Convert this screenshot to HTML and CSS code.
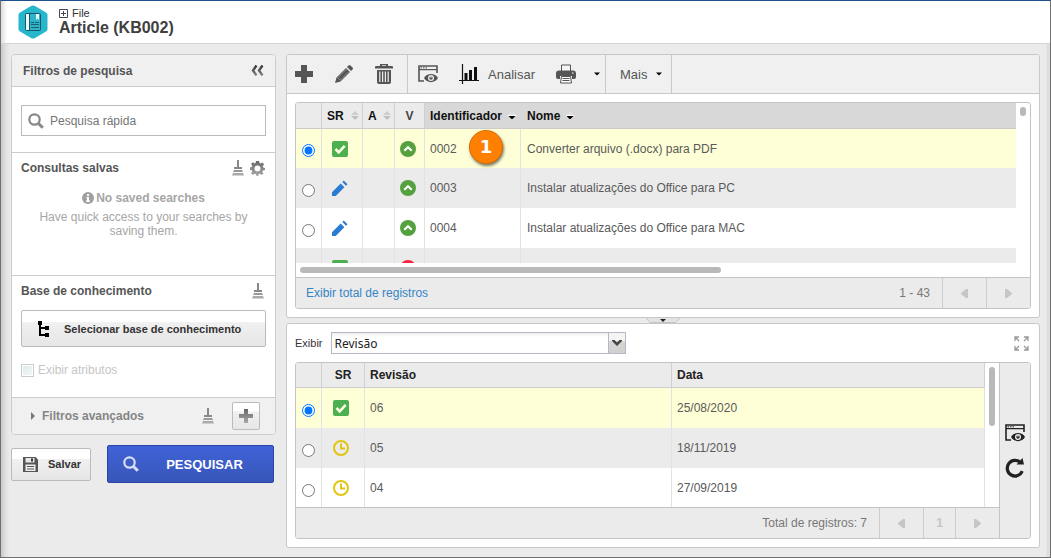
FILE: index.html
```html
<!DOCTYPE html>
<html lang="pt-BR">
<head>
<meta charset="utf-8">
<title>Article (KB002)</title>
<link rel="stylesheet" href="styles.css">
</head>
<body>
<svg class="sprite" aria-hidden="true">
  <defs>
    <linearGradient id="metal" x1="0" y1="0" x2="0" y2="1"><stop offset="0" stop-color="#666"/><stop offset="1" stop-color="#aaa"/></linearGradient>
    <linearGradient id="metal-dark" x1="0" y1="0" x2="0" y2="1"><stop offset="0" stop-color="#333"/><stop offset="1" stop-color="#888"/></linearGradient>
  </defs>
  <symbol id="i-broom" viewBox="0 0 12 16"><path d="M5 0h2v7h3v2H2V7h3z" fill="#888"/><path d="M2 10h8l1 2H1z" fill="#999"/><path d="M1 13h10l1 2.500H0z" fill="#aaa"/></symbol>
  <symbol id="i-check" viewBox="0 0 16 16"><rect width="16" height="16" rx="2" fill="#4caf50"/><path d="M3.500 8l3.200 3.300L12.700 4.800" fill="none" stroke="#fdfde0" stroke-width="2.600"/></symbol>
  <symbol id="i-edit" viewBox="0 0 16 16"><path d="M0 12.300L8.700 3.600l3.700 3.700L3.700 16H0zM10.300 2l1.500-1.500 3.700 3.700L14 5.700z" fill="#2b7bd0"/></symbol>
  <symbol id="i-up" viewBox="0 0 16 16"><circle cx="8" cy="8" r="8" fill="#55a03f"/><path d="M4.300 9.700L8 6.200l3.700 3.500" fill="none" stroke="#fff" stroke-width="2.200"/></symbol>
  <symbol id="i-clock" viewBox="0 0 16 16"><circle cx="8" cy="8" r="7" fill="none" stroke="#e2c511" stroke-width="2"/><path d="M8 3.500V8.500h4" fill="none" stroke="#e2c511" stroke-width="2"/></symbol>
  <symbol id="i-sort" viewBox="0 0 8 9"><path d="M4 0l4 4H0z" fill="#ccc"/><path d="M0 5h8L4 9z" fill="#c0c0c0"/></symbol>
  <symbol id="i-sorted" viewBox="0 0 8 9"><path d="M4 0l4 4H0z" fill="#e0e0e0"/><path d="M0 4h8v1H0z" fill="#fff"/><path d="M.5 5h7L4.500 8h-1z" fill="#000"/></symbol>
  <symbol id="i-caret" viewBox="0 0 6 4"><path d="M0 .5h6L3 3.500z"/></symbol>
  <symbol id="i-prev" viewBox="0 0 7 9"><path d="M7 0v9H5L0 5V4l5-4z" fill="#c6c6c6"/></symbol>
  <symbol id="i-next" viewBox="0 0 7 9"><path d="M0 0v9h2l5-4V4L2 0z" fill="#c6c6c6"/></symbol>
  <symbol id="i-preview" viewBox="0 0 20 18"><path d="M6 16H1V1h18v7" fill="none" stroke="currentColor" stroke-width="1.600"/><path d="M1 4.600h18" stroke="currentColor" stroke-width="1.200"/><path d="M2.500 2.800h1.500M5 2.800h1.500M7.500 2.800H9" stroke="currentColor"/><path d="M6 13c2.500-5.500 11.500-5.500 14 0-2.500 5.500-11.500 5.500-14 0z" fill="currentColor"/><circle cx="13" cy="13" r="3" fill="#eee"/><circle cx="13" cy="13" r="1.700" fill="currentColor"/><path d="M13 11v2" stroke="#eee" stroke-width=".9"/></symbol>
  <symbol id="i-lens" viewBox="0 0 16 16"><circle cx="6.500" cy="6.500" r="5.200" fill="none" stroke="currentColor" stroke-width="2.200"/><path d="M10.500 10.500l4.300 4.300" stroke="currentColor" stroke-width="3"/></symbol>
</svg>

<div class="window">
  <header class="masthead">
    <svg class="logo" viewBox="0 0 30 34"><path d="M15 .5q1 0 2 .6l11 6.300q1.500.9 1.500 2.600v14q0 1.700-1.500 2.600l-11 6.300q-2 1.200-4 0l-11-6.300Q.5 25.700.5 24V10q0-1.700 1.500-2.600l11-6.300q1-.6 2-.6z" fill="#27b7cc"/><rect x="7.500" y="8.500" width="15" height="17" rx="1" fill="#2fb3c9" stroke="#1d5468"/><path d="M8 9h3v16H8z" fill="#e8fbfd"/><path d="M11.500 9v16" stroke="#1d5468"/><path d="M18 9h3v6l-1.500-1.500L18 15z" fill="#e8fbfd"/><path d="M13 17.500h3M13 19.500h8M13 22.500h8M17 17.500h4" stroke="#1d5468" stroke-width=".9"/></svg>
    <div>
      <div class="crumb"><svg class="icon-9" viewBox="0 0 9 9"><path d="M.5.5h8v8h-8zM2 4.500h5M4.500 2v5" fill="none" stroke="#445"/></svg>File</div>
      <h1>Article (KB002)</h1>
    </div>
  </header>

  <main class="workspace">
    <aside class="filters">
      <form>
        <div class="card">
          <div class="card-head">
            <h2>Filtros de pesquisa</h2>
            <button type="button" class="bare" aria-label="Recolher"><svg class="icon-collapse" viewBox="0 0 13 11"><path d="M5.500.5L2 5.500l3.500 5M11.500.5L8 5.500l3.500 5" fill="none" stroke="url(#metal-dark)" stroke-width="2.400"/></svg></button>
          </div>
          <div class="section section-search">
            <div class="search-box">
              <svg class="icon-16"><use href="#i-lens"/></svg>
              <input type="text" placeholder="Pesquisa rápida" aria-label="Pesquisa rápida">
            </div>
          </div>
          <div class="section section-saved">
            <div class="section-title">
              <h3>Consultas salvas</h3>
              <button type="button" class="bare" aria-label="Limpar"><svg class="icon-broom"><use href="#i-broom"/></svg></button>
              <button type="button" class="bare" aria-label="Configurar"><svg class="icon-gear" viewBox="0 0 15 15"><g fill="url(#metal)"><path fill-rule="evenodd" d="M6 0h3l.5 2 1.300.6L12.500 1.500l1.500 2-1.300 1.700.6 1.300L15 7v2l-2 .5-.6 1.300 1.100 1.700-2 1.500-1.700-1.300-1.300.6L8.500 15h-2L6 13.300l-1.300-.6L3 14l-2-1.700 1.300-1.700-.6-1.300L0 9V6.500L1.800 6l.5-1.300L1 3l2-1.800 1.700 1.200L5.500 2zM7.500 4.500a3 3 0 100 6 3 3 0 000-6z"/></g></svg></button>
            </div>
            <p class="empty-title"><svg class="icon-12" viewBox="0 0 12 12"><circle cx="6" cy="6" r="6" fill="#a0a0a0"/><path d="M5 2h2v2H5zM4.500 5H7v3.500h1V10H4V8.500h1V6.200h-.5z" fill="#fff"/></svg>No saved searches</p>
            <p class="empty-text">Have quick access to your searches by saving them.</p>
          </div>
          <div class="section section-base">
            <div class="section-title">
              <h3>Base de conhecimento</h3>
              <button type="button" class="bare" aria-label="Limpar"><svg class="icon-broom"><use href="#i-broom"/></svg></button>
            </div>
            <button type="button" class="btn btn-select"><svg class="icon-tree" viewBox="0 0 12 16"><path d="M0 0h4v4H0zM7 5h4v4H7zM7 12h4v4H7z"/><path d="M2 3v11h6M2 7h6" fill="none" stroke="#000" stroke-width="2"/></svg>Selecionar base de conhecimento</button>
            <label class="attr"><input type="checkbox" disabled>Exibir atributos</label>
          </div>
          <div class="card-foot">
            <svg class="icon-tri" viewBox="0 0 4 8"><path d="M0 0l4 4-4 4z" fill="#777"/></svg>
            <h3>Filtros avançados</h3>
            <button type="button" class="bare" aria-label="Limpar"><svg class="icon-broom"><use href="#i-broom"/></svg></button>
            <button type="button" class="btn btn-add" aria-label="Adicionar"><svg class="icon-14" viewBox="0 0 14 14"><path d="M5 0h4v5h5v4H9v5H5V9H0V5h5z" fill="url(#metal)"/></svg></button>
          </div>
        </div>
        <div class="actions">
          <button type="button" class="btn btn-save"><svg class="icon-15" viewBox="0 0 15 15"><path d="M0 0h12.500L15 2.500V15H0z" fill="#555"/><path d="M2.500 1h9v4.500h-9z" fill="#e8e8e8"/><path d="M8 1.500h2v3H8z" fill="#333"/><path d="M2.500 7.500h10V14h-10z" fill="#eee"/><path d="M4 9.500h7M4 12h7" stroke="#555"/></svg>Salvar</button>
          <button type="submit" class="btn-go"><svg class="icon-16"><use href="#i-lens"/></svg><span>PESQUISAR</span></button>
        </div>
      </form>
    </aside>

    <div class="results">
      <section class="panel">
        <div class="toolbar">
          <div class="tool-group group-edit">
            <button type="button" class="bare" aria-label="Novo"><svg class="icon-18" viewBox="0 0 18 18"><path d="M6 0h6v6h6v6h-6v6H6v-6H0V6h6z" fill="#555"/></svg></button>
            <button type="button" class="bare" aria-label="Editar"><svg class="icon-18" viewBox="0 0 18 18"><path d="M0 18l1.500-5.500L11 3l4 4-9.500 9.500zM12 2l1.500-1.500q1-1 2 0l2 2q1 1 0 2L16 6z" fill="#555"/><path d="M2.500 12.500l3 3M3 12.500L11.500 4M5.500 15L14 6.500" stroke="#aaa" stroke-width=".7"/></svg></button>
            <button type="button" class="bare" aria-label="Excluir"><svg class="icon-trash" viewBox="0 0 18 20"><path d="M0 3q0-1 1-1h4V0h8v2h4q1 0 1 1v1.500H0zM7 1.200V2h4v-.8z" fill="#555" fill-rule="evenodd"/><path d="M2 6h14v12q0 2-2 2H4q-2 0-2-2z" fill="#555"/><path d="M4.800 7.500V18M7.600 7.500V18M10.400 7.500V18M13.200 7.500V18" stroke="#efefef" stroke-width="1.200"/></svg></button>
          </div>
          <div class="tool-group group-view">
            <button type="button" class="bare" aria-label="Visualizar"><svg class="icon-preview"><use href="#i-preview"/></svg></button>
            <button type="button" class="bare tool-text"><svg class="icon-chart" viewBox="0 0 20 20"><path d="M3.500 0v20M0 16.500h20" stroke="#111" stroke-width="1.200"/><path d="M5.500 9h3v8h-3zM10 6h3v11h-3zM15 3h3v14h-3z" fill="#111"/></svg>Analisar</button>
            <button type="button" class="bare tool-print" aria-label="Imprimir"><svg class="icon-print" viewBox="0 0 20 20"><path d="M5.500 7V1h9v6" fill="#f4f4f4" stroke="#555"/><path d="M3 6.500h14q3 0 3 3V13q0 2-2 2h-2v-3H4v3H2q-2 0-2-2V9.500q0-3 3-3z" fill="#555"/><path d="M5.500 12.500h9l1 6.500H4.500z" fill="#fff" stroke="#555"/><path d="M6.500 14.500h7M6.500 16.500h7" stroke="#555"/><path d="M16 9h1.500" stroke="#fff"/></svg><svg class="icon-caret"><use href="#i-caret"/></svg></button>
          </div>
          <div class="tool-group group-more">
            <button type="button" class="bare tool-text">Mais<svg class="icon-caret"><use href="#i-caret"/></svg></button>
          </div>
        </div>

        <div class="grid-wrap">
          <div class="grid">
            <div class="grid-body body-articles">
              <div class="viewport">
                <table class="table-articles">
                  <colgroup><col class="c-radio"><col class="c-sr"><col class="c-a"><col class="c-v"><col class="c-id"><col></colgroup>
                  <thead>
                    <tr>
                      <th aria-label="Selecionar"></th>
                      <th><span class="sorter">SR<svg class="icon-sort"><use href="#i-sort"/></svg></span></th>
                      <th><span class="sorter">A<svg class="icon-sort"><use href="#i-sort"/></svg></span></th>
                      <th class="center plain">V</th>
                      <th class="active"><span class="sorter">Identificador<svg class="icon-sort"><use href="#i-sorted"/></svg></span></th>
                      <th class="active"><span class="sorter sorter-name">Nome<svg class="icon-sort"><use href="#i-sorted"/></svg></span></th>
                    </tr>
                  </thead>
                  <tbody>
                    <tr class="selected">
                      <td><input type="radio" name="article" aria-label="0002" checked></td>
                      <td class="center"><svg class="icon-16"><use href="#i-check"/></svg></td><td></td>
                      <td class="center"><svg class="icon-16"><use href="#i-up"/></svg></td>
                      <td class="has-step">0002<span class="step">1</span></td><td class="name">Converter arquivo (.docx) para PDF</td>
                    </tr>
                    <tr class="odd">
                      <td><input type="radio" name="article" aria-label="0003"></td>
                      <td class="center"><svg class="icon-16"><use href="#i-edit"/></svg></td><td></td>
                      <td class="center"><svg class="icon-16"><use href="#i-up"/></svg></td>
                      <td>0003</td><td class="name">Instalar atualizações do Office para PC</td>
                    </tr>
                    <tr>
                      <td><input type="radio" name="article" aria-label="0004"></td>
                      <td class="center"><svg class="icon-16"><use href="#i-edit"/></svg></td><td></td>
                      <td class="center"><svg class="icon-16"><use href="#i-up"/></svg></td>
                      <td>0004</td><td class="name">Instalar atualizações do Office para MAC</td>
                    </tr>
                    <tr class="odd">
                      <td></td>
                      <td class="center"><svg class="icon-16"><use href="#i-check"/></svg></td><td></td>
                      <td class="center"><svg class="icon-16" viewBox="0 0 16 16"><circle cx="8" cy="8" r="8" fill="#f5243f"/></svg></td>
                      <td></td><td></td>
                    </tr>
                  </tbody>
                </table>
              </div>
              <div class="vtrack"><div class="vthumb thumb-short"></div></div>
            </div>
            <div class="htrack"><div class="hthumb"></div></div>
            <div class="pager">
              <a href="#total">Exibir total de registros</a>
              <span class="count">1 - 43</span>
              <button type="button" class="page-btn" aria-label="Anterior"><svg class="icon-page"><use href="#i-prev"/></svg></button>
              <button type="button" class="page-btn" aria-label="Próxima"><svg class="icon-page"><use href="#i-next"/></svg></button>
            </div>
          </div>
        </div>
      </section>

      <div class="splitter"><svg viewBox="0 0 34 5"><path d="M0 0l4 4.500h26L34 0" fill="#e3e3e3" stroke="#c4c4c4"/><path d="M14 1h6l-3 3z" fill="#222"/></svg></div>

      <section class="panel panel-detail">
        <div class="show-row">
          <label for="show">Exibir</label>
          <div class="combo">
            <select id="show"><option>Revisão</option></select>
            <span class="combo-arrow"><svg viewBox="0 0 10 6"><path d="M0 0h2.500L5 2.500 7.500 0H10v1L5 6 0 1z" fill="#444"/></svg></span>
          </div>
          <button type="button" class="bare expand" aria-label="Expandir"><svg class="icon-15" viewBox="0 0 15 15"><path d="M1 5V1h4M1 1l4 4M10 1h4v4M14 1l-4 4M1 10v4h4M1 14l4-4M14 10v4h-4M14 14l-4-4" fill="none" stroke="#999" stroke-width="1.300"/></svg></button>
        </div>
        <div class="grid detail-grid">
          <div class="detail-main">
            <div class="grid-body body-revisions">
              <div class="viewport">
                <table class="table-revisions">
                  <colgroup><col class="c-radio"><col class="c-status"><col class="c-revision"><col></colgroup>
                  <thead><tr><th aria-label="Selecionar"></th><th class="center">SR</th><th>Revisão</th><th>Data</th></tr></thead>
                  <tbody>
                    <tr class="selected"><td><input type="radio" name="revision" aria-label="06" checked></td><td class="center"><svg class="icon-16"><use href="#i-check"/></svg></td><td>06</td><td>25/08/2020</td></tr>
                    <tr class="odd"><td><input type="radio" name="revision" aria-label="05"></td><td class="center"><svg class="icon-16"><use href="#i-clock"/></svg></td><td>05</td><td>18/11/2019</td></tr>
                    <tr><td><input type="radio" name="revision" aria-label="04"></td><td class="center"><svg class="icon-16"><use href="#i-clock"/></svg></td><td>04</td><td>27/09/2019</td></tr>
                  </tbody>
                </table>
              </div>
              <div class="vtrack"><div class="vthumb thumb-long"></div></div>
            </div>
            <div class="pager">
              <span class="count">Total de registros: 7</span>
              <button type="button" class="page-btn" aria-label="Anterior"><svg class="icon-page"><use href="#i-prev"/></svg></button>
              <button type="button" class="page-btn page-num">1</button>
              <button type="button" class="page-btn" aria-label="Próxima"><svg class="icon-page"><use href="#i-next"/></svg></button>
            </div>
          </div>
          <div class="side-tools">
            <button type="button" class="bare" aria-label="Visualizar"><svg class="icon-preview"><use href="#i-preview"/></svg></button>
            <button type="button" class="bare" aria-label="Atualizar"><svg class="icon-20" viewBox="0 0 20 20"><path d="M17.300 13.200a7.800 7.800 0 11-1.800-8.600" fill="none" stroke="#222" stroke-width="3.200"/><path d="M17.500 0l1.500 6.500h-7.500z" fill="#222"/></svg></button>
          </div>
        </div>
      </section>
    </div>
  </main>
</div>
</body>
</html>
```
FILE: styles.css
```css
* { box-sizing: border-box; }

body {
  margin: 0;
  font: 12px/16px "Liberation Sans", Arial, sans-serif;
  color: #555;
}

h1, h2, h3, p { margin: 0; }
h2, h3 { font-size: 12px; line-height: 16px; color: #555; }
button, input, select { font-family: inherit; }
svg { display: block; flex: none; }

.sprite { position: absolute; width: 0; height: 0; }

.icon-9 { width: 9px; height: 9px; }
.icon-12 { width: 12px; height: 12px; }
.icon-14 { width: 14px; height: 14px; }
.icon-15 { width: 15px; height: 15px; }
.icon-16 { width: 16px; height: 16px; }
.icon-18 { width: 18px; height: 18px; }
.icon-20 { width: 20px; height: 20px; }
.icon-collapse { width: 13px; height: 11px; }
.icon-broom { width: 12px; height: 16px; }
.icon-gear { width: 15px; height: 15px; }
.icon-tree { width: 12px; height: 16px; }
.icon-tri { width: 4px; height: 8px; }
.icon-trash { width: 18px; height: 20px; }
.icon-preview { width: 20px; height: 18px; }
.icon-chart { width: 20px; height: 20px; }
.icon-print { width: 20px; height: 20px; }
.icon-caret { width: 6px; height: 4px; }
.icon-sort { width: 8px; height: 9px; }
.icon-page { width: 7px; height: 9px; }

.bare {
  display: flex;
  align-items: center;
  padding: 0;
  border: 0;
  background: none;
  color: #555;
}

.window {
  display: flex;
  flex-direction: column;
  height: 100vh;
  min-height: 540px;
  border: 1px solid #707070;
  border-top-color: #1f5087;
}

.masthead {
  display: flex;
  align-items: center;
  gap: 11px;
  height: 43px;
  flex: none;
  padding-left: 17px;
  border-bottom: 1px solid #d4d4d4;
  background: linear-gradient(90deg, #dcdcdc, #fff 6px);
}
.logo { width: 30px; height: 34px; }
.crumb { display: flex; align-items: center; gap: 4px; font-size: 11px; line-height: 12px; color: #333; }
.masthead h1 { font-size: 16px; line-height: 18px; color: #404040; }

.workspace {
  display: flex;
  flex: 1;
  min-height: 0;
  gap: 10px;
  padding: 10px 10px 9px;
  background: linear-gradient(90deg, #c9c9c9, #e2e2e2 5px, #ebebeb 9px, #ebebeb calc(100% - 4px), #dedede calc(100% - 3px));
}

/* Filters */
.filters { width: 265px; flex: none; }
.card { border: 1px solid #ccc; border-radius: 4px; background: #fff; overflow: hidden; }
.card-head {
  display: flex;
  align-items: center;
  justify-content: space-between;
  height: 32px;
  padding: 0 11px;
  border-bottom: 1px solid #ccc;
  background: #f0f0f0;
}
.section { padding: 0 9px; border-bottom: 1px solid #ccc; }
.section-search { padding-top: 18px; padding-bottom: 16px; }
.search-box { display: flex; align-items: center; gap: 6px; height: 31px; padding: 0 6px; border: 1px solid #bbb; color: #888; }
.search-box input { flex: 1; min-width: 0; padding: 0; border: 0; outline: 0; font-size: 12px; color: #555; }
.search-box input::placeholder { color: #757575; opacity: 1; }
.section-title { display: flex; align-items: center; gap: 6px; height: 16px; }
.section-title h3 { flex: 1; }
.section-saved { padding-top: 7px; height: 123px; }
.section-saved .section-title { padding-right: 1px; }
.empty-title { display: flex; align-items: center; justify-content: center; gap: 2px; margin-top: 14px; font-weight: bold; color: #a6a6a6; }
.empty-text { margin: 4px 16px 0; line-height: 14px; text-align: center; color: #a6a6a6; }
.section-base { padding-top: 7px; padding-bottom: 19px; }
.section-base .section-title { padding-right: 2px; }

.btn {
  display: flex;
  align-items: center;
  border: 1px solid #bbb;
  border-radius: 2px;
  background: linear-gradient(#fff 32%, #f0f0f0 33%, #e6e6e6);
  color: #333;
  font-size: 11px;
  font-weight: bold;
}
.btn-select { width: 100%; height: 37px; gap: 14px; margin-top: 11px; padding: 0 16px; }
.attr { display: flex; align-items: center; gap: 4px; margin-top: 15px; color: #c6c6c6; }
.attr input {
  appearance: none;
  width: 13px;
  height: 13px;
  margin: 0;
  border: 1px solid #ccc;
  background: #fff linear-gradient(135deg, #dcebed, #f6f6f6) center / 9px 9px no-repeat;
}
.card-foot { display: flex; align-items: center; height: 36px; padding: 0 15px 0 19px; background: #f0f0f0; }
.card-foot h3 { flex: 1; margin-left: 7px; color: #858585; }
.btn-add { justify-content: center; width: 28px; height: 28px; margin-left: 18px; padding: 0; }

.actions { display: flex; align-items: center; gap: 16px; margin-top: 10px; padding-right: 2px; }
.btn-save { height: 33px; width: 80px; gap: 10px; padding: 0 11px; }
.btn-go {
  display: flex;
  align-items: center;
  flex: 1;
  height: 38px;
  gap: 12px;
  padding: 0 15px;
  border: 1px solid #2a45a5;
  border-radius: 2px;
  background: linear-gradient(#3f62d8, #3856b8);
  color: #fff;
  font-size: 13px;
  font-weight: bold;
}
.btn-go span { flex: 1; text-align: center; }
.btn-go svg { color: #d8dff5; }

/* Results */
.results { display: flex; flex-direction: column; flex: 1; min-width: 0; }
.panel { border: 1px solid #c8c8c8; border-radius: 3px; background: #fff; }
.toolbar { display: flex; height: 39px; border-bottom: 1px solid #c8c8c8; border-radius: 2px 2px 0 0; background: #f0f0f0; }
.tool-group { display: flex; align-items: center; border-right: 1px solid #c8c8c8; }
.group-edit { gap: 22px; padding: 0 14px 0 8px; }
.group-view { gap: 21px; padding: 0 5px 0 10px; }
.group-more { padding: 0 9px 0 14px; }
.tool-text { gap: 9px; font-size: 13px; }
.tool-text .icon-caret, .tool-print .icon-caret { color: #000; }
.tool-print { gap: 18px; }

.grid-wrap { padding: 8px; }
.grid { border: 1px solid #c4c4c4; border-radius: 3px; overflow: hidden; }
.grid-body { display: flex; }
.body-articles { height: 160px; }
.viewport { flex: 1; min-width: 0; overflow: hidden; }
.vtrack { width: 14px; flex: none; padding: 4px; }
.vthumb { width: 6px; border-radius: 3px; background: #b9b9b9; }
.thumb-short { height: 9px; }
.thumb-long { height: 59px; }
.htrack { height: 14px; padding: 4px; }
.hthumb { width: 58%; height: 6px; border-radius: 3px; background: #b9b9b9; }

table { width: 100%; table-layout: fixed; border-collapse: separate; border-spacing: 0; }
th, td { padding: 0 5px; text-align: left; white-space: nowrap; }
th { height: 26px; border-right: 1px solid #d0d0d0; border-bottom: 1px solid #ccc; background: #ebebeb; color: #222; }
td { height: 40px; border-right: 1px solid #e2e2e2; color: #5a5a5a; }
.table-articles th:last-child, .table-articles td:last-child { padding-left: 6px; border-right: 0; }
.table-articles th { color: #111; }
.table-articles th.plain { color: #444; }
.table-articles th.active { background: #d8d8d8; border-right-color: #d8d8d8; }
.table-articles .selected td { height: 39px; }
.table-revisions th { height: 25px; }
.center { padding: 0; text-align: center; }
td.center { padding-right: 4px; }
.center svg { margin: 0 auto; }
td input { display: block; margin: 4px 0 0 1px; }
.selected td { background: #feffd6; }
.odd td { background: #ebebeb; }
.c-radio { width: 26px; }
.c-sr { width: 41px; }
.c-a { width: 32px; }
.c-v { width: 30px; }
.c-id { width: 96px; }
.c-status { width: 43px; }
.c-revision { width: 307px; }
.sorter { display: flex; align-items: center; justify-content: space-between; margin-right: -2px; }
.active .sorter { margin-right: -1px; }
.sorter-name { justify-content: flex-start; gap: 6px; }

.has-step { position: relative; }
.step {
  position: absolute;
  top: 1px;
  left: 44px;
  width: 34px;
  height: 34px;
  border: 1px solid #d96c00;
  border-radius: 50%;
  background: #ff8000;
  box-shadow: 1px 2px 3px #0008;
  color: #fff;
  font: bold 18px/32px "DejaVu Sans", sans-serif;
  text-align: center;
}

.pager { display: flex; align-items: center; height: 31px; flex: none; border-top: 1px solid #c4c4c4; background: #ebebeb; }
.pager a { padding-left: 10px; color: #3585c6; text-decoration: none; }
.count { margin-left: auto; padding-right: 12px; color: #777; }
.page-btn {
  display: flex;
  align-items: center;
  justify-content: center;
  align-self: stretch;
  width: 44px;
  padding: 0;
  border: 0;
  border-left: 1px solid #ccc;
  background: none;
}
.page-num { width: 32px; color: #c6c6c6; font-size: 12px; font-weight: bold; }

.splitter { display: flex; justify-content: center; height: 5px; flex: none; }
.splitter svg { width: 34px; height: 5px; }

.panel-detail { display: flex; flex-direction: column; flex: 1; min-height: 0; gap: 8px; padding: 8px; }
.show-row { display: flex; align-items: center; height: 22px; flex: none; gap: 8px; }
.show-row label { font-size: 11px; color: #333; }
.combo { position: relative; width: 295px; height: 22px; }
.combo select {
  appearance: none;
  width: 100%;
  height: 22px;
  padding: 0 3px;
  border: 1px solid #b5b8c8;
  border-radius: 0;
  background: linear-gradient(#eee, #fff 4px);
  color: #222;
  font: 12px "Noto Sans", sans-serif;
}
.combo-arrow {
  position: absolute;
  top: 1px;
  right: 1px;
  display: grid;
  place-items: center;
  width: 17px;
  height: 20px;
  border-left: 1px solid #b5b8c8;
  background: linear-gradient(#f4f4f4 40%, #d6d6d6 41%, #d0d0d0);
  pointer-events: none;
}
.combo-arrow svg { width: 10px; height: 6px; }
.expand { margin-left: auto; padding-right: 2px; }
.detail-grid { display: flex; flex: 1; min-height: 0; }
.detail-main { display: flex; flex-direction: column; flex: 1; min-width: 0; }
.body-revisions { flex: 1; min-height: 0; }
.side-tools {
  display: flex;
  flex-direction: column;
  align-items: center;
  justify-content: center;
  gap: 16px;
  width: 31px;
  border-left: 1px solid #c4c4c4;
  background: #ebebeb;
}
.side-tools .bare { color: #222; }
```
